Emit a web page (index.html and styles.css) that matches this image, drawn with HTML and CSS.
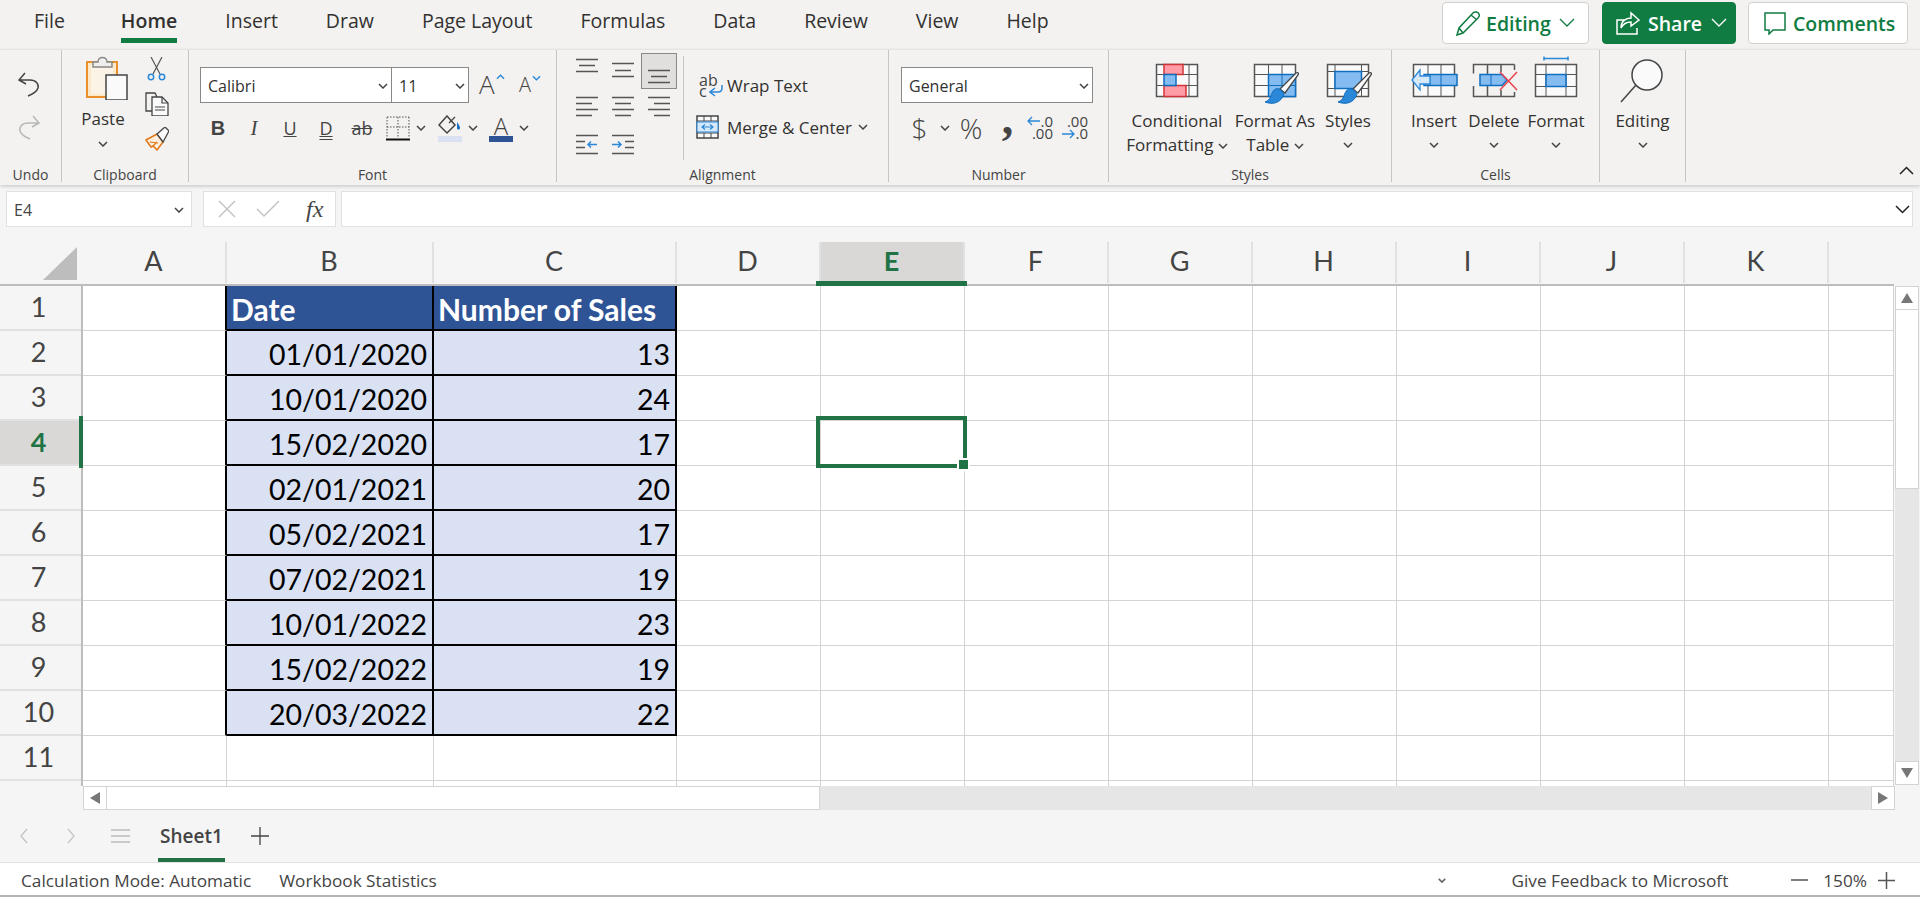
FILE: index.html
```html
<!DOCTYPE html>
<html lang="en">
<head>
<meta charset="utf-8">
<title>Excel</title>
<link rel="stylesheet" href="styles.css">
</head>
<body>
<svg class="defs" width="0" height="0">
  <defs>
    <symbol id="chev" viewBox="0 0 10 6"><path d="M1 1l4 4 4-4" fill="none" stroke="#444" stroke-width="1.5"/></symbol>
    <symbol id="brush" viewBox="0 0 48 48" overflow="visible">
      <path d="M29 33L45 17c2-1 3 0 2 2L34 37z" fill="#fafafa" stroke="#444" stroke-width="1.300"/>
      <path d="M30 34c-6-4-9 2-10 6-1 3-3 5-6 6 8 3 16 1 19-8z" fill="#2b88d8" stroke="#106ebe" stroke-width="1"/>
    </symbol>
  </defs>
</svg>

<header class="tabbar">
  <nav class="tabs">
    <span class="tab t-file">File</span>
    <span class="tab active">Home</span>
    <span class="tab">Insert</span>
    <span class="tab">Draw</span>
    <span class="tab">Page Layout</span>
    <span class="tab">Formulas</span>
    <span class="tab">Data</span>
    <span class="tab">Review</span>
    <span class="tab">View</span>
    <span class="tab">Help</span>
  </nav>
  <div class="actions">
    <button class="act act-edit">
      <svg width="26" height="26" viewBox="0 0 26 26"><path d="M2 25l2-7L18 3c2-2 5-1 6 1s0 3-1 4L8 23zM4 18l4 5M16 5l6 5" fill="none" stroke="#107c41" stroke-width="1.500"/></svg>
      <span>Editing</span>
      <svg class="chv" width="16" height="10" viewBox="0 0 16 10"><path d="M1 1l7 7 7-7" fill="none" stroke="#107c41" stroke-width="1.300"/></svg>
    </button>
    <button class="act act-share">
      <svg width="24" height="24" viewBox="0 0 24 24"><path d="M9 9H1v14h20v-6M5 17c0-7 5-10 10-10V2l8 7-8 6v-4c-4 0-8 2-10 6z" fill="none" stroke="#fff" stroke-width="1.500"/></svg>
      <span>Share</span>
      <svg class="chv" width="16" height="10" viewBox="0 0 16 10"><path d="M1 1l7 7 7-7" fill="none" stroke="#fff" stroke-width="1.300"/></svg>
    </button>
    <button class="act act-comm">
      <svg width="24" height="24" viewBox="0 0 24 24"><path d="M2 2h20v17H10l-4 4v-4H2z" fill="none" stroke="#107c41" stroke-width="1.500"/></svg>
      <span>Comments</span>
    </button>
  </div>
</header>

<section class="ribbon">
  <div class="grp g-undo">
    <div class="body undo-body">
      <svg width="24" height="25" viewBox="0 0 24 25"><path d="M8 1L2 8l7 4M2 8h11c6 0 9 4 8 8-1 3-5 6-10 8" fill="none" stroke="#444" stroke-width="1.500"/></svg>
      <svg width="24" height="25" viewBox="0 0 24 25"><path d="M16 1l6 7-7 4M22 8H11C5 8 2 12 3 16c1 3 5 6 10 8" fill="none" stroke="#b8b8b8" stroke-width="1.500"/></svg>
    </div>
    <div class="label">Undo</div>
  </div>

  <div class="grp g-clip">
    <div class="body clip-body">
      <div class="paste">
        <svg width="42" height="44" viewBox="0 0 42 44">
          <rect x="1" y="6" width="30" height="35" fill="#fde9c9" stroke="#e8912c" stroke-width="2"/>
          <rect x="5" y="9" width="22" height="29" fill="#fafafa" opacity=".6"/>
          <path d="M7 11V6h5c0-6 9-6 9 0h5v5z" fill="#eee" stroke="#8a8886" stroke-width="1.500"/>
          <rect x="20" y="19" width="21" height="25" fill="#fafafa" stroke="#444" stroke-width="1.500"/>
        </svg>
        <span class="rtext paste-t">Paste</span>
        <svg class="c10" width="10" height="6"><use href="#chev"/></svg>
      </div>
      <div class="clip-tools">
        <svg width="24" height="24" viewBox="0 0 24 24"><path d="M8 17L17 0M15 17L6 0" stroke="#555" stroke-width="1.200" fill="none"/><circle cx="6" cy="20" r="2.700" fill="none" stroke="#2b88d8" stroke-width="1.500"/><circle cx="17" cy="20" r="2.700" fill="none" stroke="#2b88d8" stroke-width="1.500"/></svg>
        <svg width="24" height="24" viewBox="0 0 24 24"><path d="M9 19H1V1h9l2 4" fill="none" stroke="#444" stroke-width="1.300"/><path d="M7 5h10l6 6v13H7z" fill="#fafafa" stroke="#444" stroke-width="1.300"/><path d="M17 5v6h6M10 15h10M10 18h10" fill="none" stroke="#444" stroke-width="1.200"/></svg>
        <svg width="24" height="24" viewBox="0 0 24 24"><path d="M1 13l11-6 6 8-6 8-4-4-2 1z" fill="#fdeedd" stroke="#e0791c" stroke-width="1.500"/><path d="M5 15l8 1M8 19l4-4" stroke="#e0791c" stroke-width="1.200"/><path d="M12 7l8-7 4 4-6 11z" fill="#fafafa" stroke="#444" stroke-width="1.300"/></svg>
      </div>
    </div>
    <div class="label">Clipboard</div>
  </div>

  <div class="grp g-font">
    <div class="body font-body">
      <div class="font-row1">
        <div class="sel-box w-font"><span>Calibri</span><svg width="10" height="6"><use href="#chev"/></svg></div>
        <div class="sel-box w-size"><span>11</span><svg width="10" height="6"><use href="#chev"/></svg></div>
        <div class="grow"><span class="a-big">A</span><svg width="9" height="6" viewBox="0 0 10 6"><path d="M1 5l4-4 4 4" fill="none" stroke="#2b88d8" stroke-width="1.500"/></svg></div>
        <div class="shrink"><span class="a-small">A</span><svg width="9" height="6" viewBox="0 0 10 6"><path d="M1 1l4 4 4-4" fill="none" stroke="#2b88d8" stroke-width="1.500"/></svg></div>
      </div>
      <div class="font-row2">
        <span class="fb b">B</span>
        <span class="fb i">I</span>
        <span class="fb u">U</span>
        <span class="fb d">D</span>
        <span class="fb s">ab</span>
        <span class="fb">
          <svg width="24" height="25" viewBox="0 0 24 25"><path d="M1 1h22M1 1v21M23 1v21M12 1v21M1 11h22" stroke="#555" stroke-width="1" stroke-dasharray="1.500 1.500" fill="none"/><path d="M0 23.500h24" stroke="#111" stroke-width="2"/></svg>
        </span>
        <svg class="c10 mc" width="10" height="6"><use href="#chev"/></svg>
        <span class="fb ml-fill">
          <svg width="24" height="27" viewBox="0 0 24 27"><path d="M10 1l8 9-8 8-8-8z" fill="none" stroke="#444" stroke-width="1.500" transform="translate(-1 0)"/><path d="M11 8l6-6" stroke="#444" stroke-width="1.300"/><path d="M19 7c2 3 3 4 3 6s-3 2-3 0z" fill="#106ebe"/><rect y="21" width="24" height="6" fill="#d9e1f2"/></svg>
        </span>
        <svg class="c10 mc" width="10" height="6"><use href="#chev"/></svg>
        <span class="fb ml-col"><span class="col-a">A</span></span>
        <svg class="c10 mc" width="10" height="6"><use href="#chev"/></svg>
      </div>
    </div>
    <div class="label">Font</div>
  </div>

  <div class="grp g-align">
    <div class="body align-body">
      <div class="align-grid">
        <svg width="36" height="36" viewBox="0 0 36 36"><path d="M7 6.500h22M10 12.500h16M7 18.500h22" class="al"/></svg>
        <svg width="36" height="36" viewBox="0 0 36 36"><path d="M7 10.500h22M10 17.500h16M7 23.500h22" class="al"/></svg>
        <svg class="on" width="36" height="36" viewBox="0 0 36 36"><path d="M7 17.500h22M10 23.500h16M7 29.500h22" class="al"/></svg>
        <svg width="36" height="36" viewBox="0 0 36 36"><path d="M7 8.500h22M7 14.500h16M7 20.500h22M7 26.500h16" class="al"/></svg>
        <svg width="36" height="36" viewBox="0 0 36 36"><path d="M7 8.500h22M10 14.500h16M7 20.500h22M10 26.500h16" class="al"/></svg>
        <svg width="36" height="36" viewBox="0 0 36 36"><path d="M7 8.500h22M13 14.500h16M7 20.500h22M13 26.500h16" class="al"/></svg>
        <svg width="36" height="36" viewBox="0 0 36 36"><path d="M7 10.500h22M7 16.500h9M7 22.500h9M7 28.500h22" class="al"/><path d="M28 19.500h-9m3-3l-3 3 3 3" fill="none" stroke="#2b88d8" stroke-width="1.500"/></svg>
        <svg width="36" height="36" viewBox="0 0 36 36"><path d="M7 10.500h22M20 16.500h9M20 22.500h9M7 28.500h22" class="al"/><path d="M7 19.500h9m-3-3l3 3-3 3" fill="none" stroke="#2b88d8" stroke-width="1.500"/></svg>
      </div>
      <div class="align-right">
        <div class="ar-row">
          <span class="wrap-ic"><span class="wr-t">ab<br>c</span><svg width="14" height="13" viewBox="0 0 14 13"><path d="M13 1v3c0 3-2 4-4 4H2m4-4L1 8l5 4" fill="none" stroke="#2b88d8" stroke-width="1.500"/></svg></span>
          <span class="rtext">Wrap Text</span>
        </div>
        <div class="ar-row">
          <span class="merge-ic"><svg width="23" height="24" viewBox="0 0 23 24"><rect x="1" y="1" width="21" height="22" fill="#fafafa" stroke="#444" stroke-width="1.500"/><path d="M1 6h21M1 18h21M8 1v5M15 1v5M8 18v5M15 18v5" stroke="#444"/><rect x="1" y="7" width="21" height="10" fill="#d6e9fa" stroke="#2b88d8"/><path d="M6 12h11M9 9.500L6 12l3 2.500M14 9.500l3 2.500-3 2.500" fill="none" stroke="#2b88d8" stroke-width="1.200"/></svg></span>
          <span class="rtext">Merge &amp; Center</span>
          <svg class="c10 merge-c" width="10" height="6"><use href="#chev"/></svg>
        </div>
      </div>
    </div>
    <div class="label">Alignment</div>
  </div>

  <div class="grp g-num">
    <div class="body num-body">
      <div class="sel-box w-num"><span>General</span><svg width="10" height="6"><use href="#chev"/></svg></div>
      <div class="num-row">
        <span class="nb n-usd">$</span>
        <svg class="c10 mc" width="10" height="6"><use href="#chev"/></svg>
        <span class="nb n-pct">%</span>
        <span class="nb n-com"><span class="com-g">,</span></span>
        <span class="nb n-dec"><span class="dec-t">.0<br>.00</span><svg width="13" height="10" viewBox="0 0 13 10"><path d="M13 5H1m4-4L1 5l4 4" fill="none" stroke="#2b88d8" stroke-width="1.300"/></svg></span>
        <span class="nb n-dec n-dec2"><span class="dec-t">.00<br>.0</span><svg width="13" height="10" viewBox="0 0 13 10"><path d="M0 5h12M8 1l4 4-4 4" fill="none" stroke="#2b88d8" stroke-width="1.300"/></svg></span>
      </div>
    </div>
    <div class="label">Number</div>
  </div>

  <div class="grp g-styles">
    <div class="body big-body">
      <div class="big w-cf">
        <svg width="48" height="48" viewBox="0 0 48 48"><rect x="3.500" y="8.500" width="41" height="32" fill="#fafafa" stroke="#555" stroke-width="1.500"/><path d="M36 8v32M3 18.500h42M3 29.500h42" stroke="#555"/><rect x="11" y="8.500" width="19" height="10" fill="#ff9ca6" stroke="#d13438" stroke-width="1.500"/><rect x="11" y="29.500" width="22" height="11" fill="#ff9ca6" stroke="#d13438" stroke-width="1.500"/><rect x="11" y="18.500" width="12" height="11" fill="#84bbf0" stroke="#106ebe" stroke-width="1.500"/></svg>
        <span class="bt">Conditional</span>
        <span class="bt">Formatting <svg class="inl" width="10" height="6"><use href="#chev"/></svg></span>
      </div>
      <div class="big w-fat">
        <svg width="48" height="48" viewBox="0 0 48 48"><rect x="3.500" y="8.500" width="41" height="32" fill="#fafafa" stroke="#555" stroke-width="1.500"/><path d="M17.500 8v32M31 8v32M3 18.500h42M3 29.500h42" stroke="#555"/><rect x="17.500" y="18.500" width="27" height="22" fill="#84bbf0" stroke="#106ebe" stroke-width="1.500"/><path d="M31 18.500v22M17.500 29.500h27" stroke="#106ebe"/><use href="#brush" width="48" height="48"/></svg>
        <span class="bt">Format As</span>
        <span class="bt">Table <svg class="inl" width="10" height="6"><use href="#chev"/></svg></span>
      </div>
      <div class="big w-sty">
        <svg width="48" height="48" viewBox="0 0 48 48"><rect x="3.500" y="8.500" width="41" height="32" fill="#fafafa" stroke="#555" stroke-width="1.500"/><path d="M11 8v32M37.500 8v32M3 15.500h42M3 32.500h42" stroke="#555"/><rect x="11" y="15.500" width="26.500" height="17" fill="#84bbf0" stroke="#106ebe" stroke-width="1.500"/><use href="#brush" width="48" height="48"/></svg>
        <span class="bt">Styles</span>
        <svg class="c10 bc" width="10" height="6"><use href="#chev"/></svg>
      </div>
    </div>
    <div class="label">Styles</div>
  </div>

  <div class="grp g-cells">
    <div class="body big-body">
      <div class="big w-ins">
        <svg width="48" height="48" viewBox="0 0 48 48"><rect x="3.500" y="8.500" width="41" height="32" fill="#fafafa" stroke="#555" stroke-width="1.500"/><path d="M18 8v32M31 8v32" stroke="#555"/><rect x="14" y="18.500" width="33" height="11" fill="#84bbf0" stroke="#106ebe" stroke-width="1.500"/><path d="M31 18v12M20 18v12" stroke="#106ebe"/><path d="M10 14L2 24l8 10v-6h10v-8H10z" fill="#d6e9fa" stroke="#2b88d8" stroke-width="1.300"/></svg>
        <span class="bt">Insert</span>
        <svg class="c10 bc" width="10" height="6"><use href="#chev"/></svg>
      </div>
      <div class="big w-del">
        <svg width="48" height="48" viewBox="0 0 48 48"><path d="M31 8.500H3.500v9M3.500 30v10.500H44.500V36M44.500 8.500V14M31 8.500h13.500M17.500 8v10M17.500 30v10M31 8v8M31 34v6" fill="none" stroke="#555" stroke-width="1.500"/><path d="M10 18.500h22l5 5.500-5 5.500H10z" fill="#84bbf0" stroke="#106ebe" stroke-width="1.500"/><path d="M21 18v12" stroke="#106ebe"/><path d="M30 16l17 18M47 16L30 34" stroke="#e8434f" stroke-width="1.500"/></svg>
        <span class="bt">Delete</span>
        <svg class="c10 bc" width="10" height="6"><use href="#chev"/></svg>
      </div>
      <div class="big w-fmt">
        <svg width="48" height="48" viewBox="0 0 48 48"><rect x="3.500" y="8.500" width="41" height="32" fill="#fafafa" stroke="#555" stroke-width="1.500"/><path d="M14 8v32M34 8v32M3 18.500h42M3 30.500h42" stroke="#555"/><rect x="14" y="18.500" width="20" height="12" fill="#84bbf0" stroke="#106ebe" stroke-width="1.500"/><path d="M12 2.500h24M12 .5v4M36 .5v4" stroke="#2b88d8" stroke-width="1.500"/></svg>
        <span class="bt">Format</span>
        <svg class="c10 bc" width="10" height="6"><use href="#chev"/></svg>
      </div>
    </div>
    <div class="label">Cells</div>
  </div>

  <div class="grp g-edit">
    <div class="body big-body">
      <div class="big w-edt">
        <svg width="48" height="48" viewBox="0 0 48 48"><circle cx="28" cy="19" r="15" fill="#fafafa" stroke="#444" stroke-width="1.500"/><path d="M17 29L2 46" stroke="#444" stroke-width="1.500"/></svg>
        <span class="bt">Editing</span>
        <svg class="c10 bc" width="10" height="6"><use href="#chev"/></svg>
      </div>
    </div>
  </div>

  <div class="collapse">
    <svg width="15" height="9" viewBox="0 0 15 9"><path d="M1 8l6.500-6.500L14 8" fill="none" stroke="#222" stroke-width="1.500"/></svg>
  </div>
</section>

<section class="formula">
  <div class="namebox"><span>E4</span><svg width="10" height="6"><use href="#chev"/></svg></div>
  <div class="fxbox">
    <svg width="18" height="18" viewBox="0 0 18 18"><path d="M1 1l16 16M17 1L1 17" stroke="#c4c4c4" stroke-width="1.500"/></svg>
    <svg width="24" height="18" viewBox="0 0 24 18"><path d="M1 9l7 7L23 1" fill="none" stroke="#c4c4c4" stroke-width="1.500"/></svg>
    <span class="fx">fx</span>
  </div>
  <div class="finput"><svg width="15" height="9" viewBox="0 0 15 9"><path d="M1 1l6.500 6.500L14 1" fill="none" stroke="#222" stroke-width="1.500"/></svg></div>
</section>

<section class="sheet">
  <div class="gridarea">
    <div class="row colhead">
      <div class="ch corner"><svg width="34" height="33" viewBox="0 0 34 33"><path d="M34 0v33H0z" fill="#bdbdbd"/></svg></div>
      <div class="ch">A</div><div class="ch">B</div><div class="ch">C</div><div class="ch">D</div><div class="ch cur">E</div><div class="ch">F</div><div class="ch">G</div><div class="ch">H</div><div class="ch">I</div><div class="ch">J</div><div class="ch">K</div><div class="ch noline"></div>
    </div>
    <div class="row"><div class="rh">1</div><div class="c tl"></div><div class="c hd">Date</div><div class="c hd">Number of Sales</div><div class="c"></div><div class="c"></div><div class="c"></div><div class="c"></div><div class="c"></div><div class="c"></div><div class="c"></div><div class="c"></div><div class="c"></div></div>
    <div class="row"><div class="rh">2</div><div class="c tl"></div><div class="c dt">01/01/2020</div><div class="c dt">13</div><div class="c"></div><div class="c"></div><div class="c"></div><div class="c"></div><div class="c"></div><div class="c"></div><div class="c"></div><div class="c"></div><div class="c"></div></div>
    <div class="row"><div class="rh">3</div><div class="c tl"></div><div class="c dt">10/01/2020</div><div class="c dt">24</div><div class="c"></div><div class="c"></div><div class="c"></div><div class="c"></div><div class="c"></div><div class="c"></div><div class="c"></div><div class="c"></div><div class="c"></div></div>
    <div class="row"><div class="rh cur">4</div><div class="c tl"></div><div class="c dt">15/02/2020</div><div class="c dt">17</div><div class="c"></div><div class="c"></div><div class="c"></div><div class="c"></div><div class="c"></div><div class="c"></div><div class="c"></div><div class="c"></div><div class="c"></div></div>
    <div class="row"><div class="rh">5</div><div class="c tl"></div><div class="c dt">02/01/2021</div><div class="c dt">20</div><div class="c"></div><div class="c"></div><div class="c"></div><div class="c"></div><div class="c"></div><div class="c"></div><div class="c"></div><div class="c"></div><div class="c"></div></div>
    <div class="row"><div class="rh">6</div><div class="c tl"></div><div class="c dt">05/02/2021</div><div class="c dt">17</div><div class="c"></div><div class="c"></div><div class="c"></div><div class="c"></div><div class="c"></div><div class="c"></div><div class="c"></div><div class="c"></div><div class="c"></div></div>
    <div class="row"><div class="rh">7</div><div class="c tl"></div><div class="c dt">07/02/2021</div><div class="c dt">19</div><div class="c"></div><div class="c"></div><div class="c"></div><div class="c"></div><div class="c"></div><div class="c"></div><div class="c"></div><div class="c"></div><div class="c"></div></div>
    <div class="row"><div class="rh">8</div><div class="c tl"></div><div class="c dt">10/01/2022</div><div class="c dt">23</div><div class="c"></div><div class="c"></div><div class="c"></div><div class="c"></div><div class="c"></div><div class="c"></div><div class="c"></div><div class="c"></div><div class="c"></div></div>
    <div class="row"><div class="rh">9</div><div class="c tl"></div><div class="c dt">15/02/2022</div><div class="c dt">19</div><div class="c"></div><div class="c"></div><div class="c"></div><div class="c"></div><div class="c"></div><div class="c"></div><div class="c"></div><div class="c"></div><div class="c"></div></div>
    <div class="row"><div class="rh">10</div><div class="c tl"></div><div class="c dt">20/03/2022</div><div class="c dt">22</div><div class="c"></div><div class="c"></div><div class="c"></div><div class="c"></div><div class="c"></div><div class="c"></div><div class="c"></div><div class="c"></div><div class="c"></div></div>
    <div class="row"><div class="rh">11</div><div class="c"></div><div class="c"></div><div class="c"></div><div class="c"></div><div class="c"></div><div class="c"></div><div class="c"></div><div class="c"></div><div class="c"></div><div class="c"></div><div class="c"></div><div class="c"></div></div>
    <div class="row tail"><div class="rh"></div><div class="c"></div><div class="c"></div><div class="c"></div><div class="c"></div><div class="c"></div><div class="c"></div><div class="c"></div><div class="c"></div><div class="c"></div><div class="c"></div><div class="c"></div><div class="c"></div></div>
    <div class="sel-col"></div>
    <div class="sel-row"></div>
    <div class="sel-cell"><span class="handle"></span></div>
  </div>
  <div class="vscroll">
    <div class="sb-btn"><svg width="12" height="10" viewBox="0 0 12 10"><path d="M6 0l6 10H0z" fill="#777"/></svg></div>
    <div class="v-thumb"></div>
    <div class="v-track"></div>
    <div class="sb-btn"><svg width="12" height="10" viewBox="0 0 12 10"><path d="M6 10L0 0h12z" fill="#777"/></svg></div>
  </div>
</section>

<section class="hscroll">
  <div class="sb-btn"><svg width="10" height="12" viewBox="0 0 10 12"><path d="M0 6l10-6v12z" fill="#777"/></svg></div>
  <div class="h-thumb"></div>
  <div class="h-track"></div>
  <div class="sb-btn"><svg width="10" height="12" viewBox="0 0 10 12"><path d="M10 6L0 12V0z" fill="#777"/></svg></div>
</section>

<section class="sheettabs">
  <svg class="st-prev" width="8" height="16" viewBox="0 0 8 16"><path d="M7 1L1 8l6 7" fill="none" stroke="#c4c4c4" stroke-width="1.300"/></svg>
  <svg class="st-next" width="8" height="16" viewBox="0 0 8 16"><path d="M1 1l6 7-6 7" fill="none" stroke="#c4c4c4" stroke-width="1.300"/></svg>
  <svg class="st-menu" width="19" height="14" viewBox="0 0 19 14"><path d="M0 1h19M0 7h19M0 13h19" stroke="#bbb" stroke-width="1.300"/></svg>
  <div class="st-tab">Sheet1</div>
  <svg class="st-add" width="18" height="18" viewBox="0 0 18 18"><path d="M9 0v18M0 9h18" stroke="#444" stroke-width="1.300"/></svg>
</section>

<footer class="status">
  <span class="s-calc">Calculation Mode: Automatic</span>
  <span class="s-stat">Workbook Statistics</span>
  <svg class="s-chev" width="8" height="5" viewBox="0 0 10 6"><path d="M1 1l4 4 4-4" fill="none" stroke="#666" stroke-width="2"/></svg>
  <span class="s-fb">Give Feedback to Microsoft</span>
  <svg class="s-minus" width="17" height="2" viewBox="0 0 17 2"><path d="M0 1h17" stroke="#555" stroke-width="1.500"/></svg>
  <span class="s-zoom">150%</span>
  <svg class="s-plus" width="17" height="17" viewBox="0 0 17 17"><path d="M8.500 0v17M0 8.500h17" stroke="#555" stroke-width="1.500"/></svg>
</footer>
</body>
</html>
```

FILE: styles.css
```css
* { box-sizing: border-box; }
html, body { margin: 0; padding: 0; }
body {
  width: 1920px; height: 897px; overflow: hidden;
  display: flex; flex-direction: column;
  background: #f5f5f5; color: #323130;
  font-family: "Open Sans", "Noto Sans", sans-serif;
}
svg { display: block; flex: none; }
.defs { position: absolute; }

/* top tab bar */
.tabbar { height: 50px; background: #f3f2f1; display: flex; justify-content: space-between; padding-right: 12px; }
.tabs { display: flex; height: 43px; padding-left: 34px; }
.tab { font-size: 19.500px; line-height: 42px; margin-left: 48px; white-space: nowrap; color: #323130; }
.t-file { margin-left: 0; margin-right: 8px; }
.tab.active { font-weight: 600; border-bottom: 5px solid #107c41; }
.actions { display: flex; gap: 12px; padding-top: 2px; height: 44px; }
.act {
  height: 42px; border: 1px solid #d2d0ce; border-radius: 4px; background: #fff;
  display: flex; align-items: center; padding: 0; font: 600 19.500px "Open Sans", sans-serif; color: #107c41;
}
.act-edit { width: 147px; padding-left: 12px; gap: 5px; margin-right: 1px; }
.act-edit .chv { margin-left: 3px; }
.act-share { width: 134px; padding-left: 13px; gap: 8px; background: #107c41; border-color: #107c41; color: #fff; }
.act-share .chv { margin-left: 1px; }
.act-comm { width: 160px; padding-left: 14px; gap: 6px; }

/* ribbon */
.ribbon { height: 135px; background: #f3f2f1; display: flex; box-shadow: 0 1px 4px rgba(0,0,0,.22); position: relative; }
.grp { height: 132px; border-right: 1px solid #c8c6c4; display: flex; flex-direction: column; }
.body { height: 115px; }
.label { height: 17px; line-height: 19px; text-align: center; font-size: 14px; color: #444; }
.rtext { font-size: 17px; color: #323130; white-space: nowrap; }
.c10 { display: block; }

.g-undo { width: 62px; }
.undo-body { display: flex; flex-direction: column; align-items: center; gap: 18px; padding: 22px 3px 0 0; }

.g-clip { width: 127px; }
.clip-body { display: flex; padding: 6px 0 0 24px; }
.paste { display: flex; flex-direction: column; align-items: center; width: 42px; }
.paste-t { margin-top: 8px; margin-right: 8px; line-height: 22px; }
.paste .c10 { margin-top: 11px; margin-right: 8px; }
.clip-tools { margin: 1px 0 0 17px; display: flex; flex-direction: column; gap: 11px; }

.g-font { width: 368px; }
.font-body { padding: 17px 0 0 11px; }
.font-row1 { display: flex; align-items: flex-start; }
.sel-box {
  height: 36px; background: #fff; border: 1px solid #8a8886;
  display: flex; align-items: center; justify-content: space-between; padding: 2px 3px 0 7px;
  font-size: 16px; color: #323130;
}
.w-font { width: 192px; }
.w-size { width: 78px; margin-left: -1px; }
.grow, .shrink { display: flex; height: 36px; color: #444; }
.grow { margin-left: 10px; width: 40px; }
.shrink { width: 30px; margin-left: 0; }
.a-big { font-size: 26px; line-height: 34px; font-weight: 300; }
.a-small { font-size: 20px; line-height: 36px; font-weight: 300; }
.grow svg { margin: 7px 0 0 1px; }
.shrink svg { margin: 8px 0 0 1px; }
.font-row2 { display: flex; align-items: center; height: 28px; margin-top: 11px; }
.fb { width: 36px; height: 28px; display: flex; justify-content: center; align-items: center; font-size: 20px; line-height: 28px; color: #444; }
.b { font-weight: 700; font-family: "Liberation Sans", sans-serif; }
.i { font-style: italic; font-family: "Liberation Serif", serif; font-size: 21px; }
.u { text-decoration: underline; font-size: 18px; }
.d { text-decoration: underline double; font-size: 18px; }
.s { text-decoration: line-through; font-size: 18px; }
.mc { margin-left: 0; margin-right: 3px; }
.ml-fill { margin-left: 3px; }
.ml-col { margin-left: 2px; }
.col-a { font-size: 24px; line-height: 21px; width: 24px; text-align: center; border-bottom: 6px solid #2f5496; font-weight: 300; }

.g-align { width: 332px; }
.align-body { display: flex; padding: 3px 0 0 12px; }
.align-grid { display: grid; grid-template-columns: repeat(3, 36px); grid-auto-rows: 36px; width: 108px; }
.al { stroke: #555; stroke-width: 1.500; fill: none; }
.on { background: #e1dfdd; outline: 1px solid #8a8886; outline-offset: -1px; }
.align-right { margin: 3px 0 0 6px; height: 104px; border-left: 1px solid #c8c6c4; padding: 17px 0 0 12px; display: flex; flex-direction: column; gap: 18px; }
.ar-row { display: flex; align-items: center; height: 24px; }
.wrap-ic { position: relative; width: 24px; height: 24px; display: block; margin: 0 5px 0 2px; }
.wr-t { position: absolute; left: 1px; top: 1.500px; font-size: 16px; line-height: 11px; color: #444; }
.wrap-ic svg { position: absolute; left: 11px; top: 11px; }
.merge-ic { width: 23px; margin-right: 8px; margin-left: 0; }
.merge-c { margin-left: 6px; }

.g-num { width: 220px; }
.num-body { padding: 17px 0 0 12px; }
.w-num { width: 192px; }
.num-row { display: flex; align-items: center; height: 28px; margin-top: 11px; }
.num-row .mc { margin: 0 5px 0 2px; }
.nb { display: flex; justify-content: center; align-items: center; height: 28px; color: #444; width: 36px; }
.n-usd { width: 37px; font-size: 28px; font-weight: 300; }
.n-pct { font-size: 28px; font-weight: 300; margin-left: -2px; }
.n-com { width: 37px; }
.com-g { font: 700 46px/14px "Liberation Serif", serif; margin-top: -19px; }
.n-dec { position: relative; width: 35px; font-size: 15px; }
.n-com + .n-dec { margin-left: -4px; }
.dec-t { position: absolute; right: 4px; top: 1px; line-height: 12px; text-align: right; color: #444; }
.n-dec svg { position: absolute; left: 5px; top: 2px; }
.n-dec2 svg { top: 15px; }

.g-styles { width: 283px; }
.g-cells { width: 208px; }
.g-edit { width: 86px; }
.big-body { display: flex; padding-top: 6px; }
.big { display: flex; flex-direction: column; align-items: center; }
.big > svg:first-child { margin-bottom: 5px; }
.bt { font-size: 17px; line-height: 24px; white-space: nowrap; color: #323130; }
.inl { display: inline-block; vertical-align: 2px; }
.bc { margin-top: 9px; }
.w-cf { width: 116px; margin-left: 10px; }
.w-fat { width: 80px; }
.w-sty { width: 66px; }
.w-ins { width: 60px; margin-left: 12px; }
.w-del { width: 60px; }
.w-fmt { width: 64px; }
.w-edt { width: 85px; }
.collapse { flex: 1; display: flex; justify-content: flex-end; align-items: flex-end; padding: 0 6px 7px 0; height: 132px; }

/* formula bar */
.formula { height: 36px; margin-top: 6px; display: flex; }
.namebox, .fxbox, .finput { background: #fff; border: 1px solid #e1e1e1; height: 36px; display: flex; align-items: center; }
.namebox { margin-left: 6px; width: 186px; justify-content: space-between; padding: 2px 7px 0 7px; font-size: 16px; color: #444; }
.fxbox { margin-left: 11px; width: 133px; padding-left: 14px; }
.fxbox svg:nth-child(2) { margin-left: 20px; }
.fx { margin-left: 26px; font: italic 400 24px "Liberation Serif", serif; color: #444; }
.finput { margin-left: 5px; width: 1572px; justify-content: flex-end; padding-right: 2px; }

/* sheet */
.sheet { height: 544px; margin-top: 15px; display: flex; }
.gridarea { width: 1894px; position: relative; background: #fff; }
.row {
  display: grid; height: 45px;
  grid-template-columns: 83px 144px 207px 243px repeat(8, 144px) 65px;
  font-family: Lato, sans-serif;
}
.colhead { height: 44px; background: #f5f5f5; border-bottom: 2px solid #bdbdbd; }
.ch {
  text-align: center; font-size: 27px; line-height: 38px; color: #444; padding-right: 3px;
  box-shadow: inset -2px 0 0 #e1e1e1; height: 41px;
}
.corner { padding: 5px 0 0 43px; box-shadow: none; }
.corner svg { display: block; }
.noline { box-shadow: none; }
.ch.cur { background: #d9d8d6; color: #217346; font-weight: 700; }
.rh {
  background: #f5f5f5; border-right: 2px solid #bdbdbd; box-shadow: inset 0 -2px 0 #e1e1e1;
  text-align: center; font-size: 27px; line-height: 42px; color: #444; padding-right: 4px;
}
.rh.cur { background: #d9d8d6; color: #217346; font-weight: 700; }
.c { border-right: 1px solid #d4d4d4; border-bottom: 1px solid #d4d4d4; font-size: 28.500px; line-height: 46px; white-space: nowrap; overflow: hidden; }
.tl { border-right: 2px solid #000; }
.hd { background: #2f5496; color: #fff; font-weight: 700; font-size: 30px; border-right: 2px solid #000; border-bottom: 2px solid #000; padding-left: 4px; }
.dt { background: #d9e1f2; color: #000; text-align: right; border-right: 2px solid #000; border-bottom: 2px solid #000; padding-right: 5px; }
.tail { height: 5px; }
.tail .rh { box-shadow: none; background: #f5f5f5; }
.tail .c { border-bottom: 0; }
.sel-col { position: absolute; left: 816px; top: 39px; width: 151px; height: 5px; background: #217346; }
.sel-row { position: absolute; left: 79px; top: 174px; width: 4px; height: 52px; background: #217346; }
.sel-cell { position: absolute; left: 816px; top: 174px; width: 151px; height: 52px; border: 4px solid #217346; }
.handle { position: absolute; right: -6px; bottom: -6px; width: 11px; height: 11px; background: #217346; border: 1px solid #fff; box-shadow: 0 0 0 1px #fff; }

.vscroll { width: 26px; padding: 44px 0 1px 1px; display: flex; flex-direction: column; background: #f5f5f5; }
.sb-btn { width: 24px; height: 24px; background: #fff; border: 1px solid #d4d4d4; display: flex; align-items: center; justify-content: center; flex: none; }
.v-thumb { height: 179px; width: 24px; background: #fff; border: 1px solid #d4d4d4; border-top: 0; }
.v-track { flex: 1; width: 24px; background: #e6e6e6; }

.hscroll { height: 24px; padding-left: 83px; display: flex; background: #f5f5f5; padding-right: 25px; }
.h-thumb { width: 713px; background: #fff; border: 1px solid #d4d4d4; border-left: 0; }
.h-track { flex: 1; background: #e6e6e6; }

.sheettabs { height: 52px; display: flex; align-items: center; }
.st-prev { margin-left: 20px; }
.st-next { margin-left: 39px; }
.st-menu { margin-left: 36px; }
.st-tab {
  margin-left: 28px; width: 67px; height: 52px; text-align: center; line-height: 52px;
  font-size: 19px; font-weight: 600; color: #444; border-bottom: 4px solid #217346;
}
.st-add { margin-left: 26px; }

.status {
  height: 35px; background: #fff; border-top: 1px solid #e1e1e1; border-bottom: 2px solid #b4b4b4;
  display: flex; align-items: center; padding-top: 2px; font-size: 17.200px; color: #444;
}
.s-calc { margin-left: 21px; }
.s-stat { margin-left: 28px; }
.s-chev { margin-left: auto; }
.s-fb { margin-left: 66px; }
.s-minus { margin-left: 63px; }
.s-zoom { margin-left: 15px; }
.s-plus { margin: 0 25px 0 11px; }
```
